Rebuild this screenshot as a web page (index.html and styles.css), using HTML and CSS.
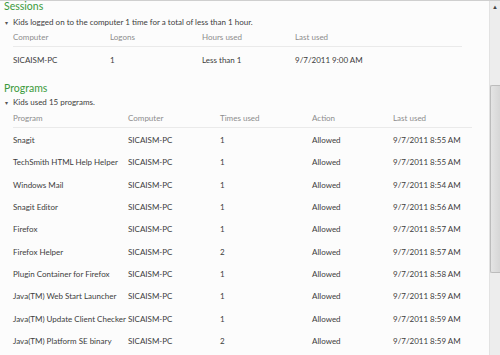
FILE: index.html
```html
<!DOCTYPE html>
<html lang="en">
<head>
    <meta charset="UTF-8">
    <title>Activity report</title>
    <link rel="stylesheet" href="styles.css">
</head>
<body>
    <div class="window">
        <div class="content">
            <h2>Sessions</h2>
            <div class="summary"><span class="arrow">&#9662;</span>Kids logged on to the computer 1 time for a total of less than 1 hour.</div>
            <div class="table sessions">
                <div class="head">Computer</div>
                <div class="head">Logons</div>
                <div class="head">Hours used</div>
                <div class="head">Last used</div>
                <div class="cell">SICAISM-PC</div>
                <div class="cell">1</div>
                <div class="cell">Less than 1</div>
                <div class="cell">9/7/2011 9:00 AM</div>
            </div>

            <h2 class="programs-title">Programs</h2>
            <div class="summary"><span class="arrow">&#9662;</span>Kids used 15 programs.</div>
            <div class="table programs" id="programs">
                <div class="head">Program</div>
                <div class="head">Computer</div>
                <div class="head">Times used</div>
                <div class="head">Action</div>
                <div class="head">Last used</div>
            </div>
        </div>
        <div class="scrollbar">
            <div class="arrow-up">&#9650;</div>
            <div class="thumb"></div>
        </div>
    </div>
    <script>
        let rows = [
            ["Snagit", 1, "8:55"],
            ["TechSmith HTML Help Helper", 1, "8:55"],
            ["Windows Mail", 1, "8:54"],
            ["Snagit Editor", 1, "8:56"],
            ["Firefox", 1, "8:57"],
            ["Firefox Helper", 2, "8:57"],
            ["Plugin Container for Firefox", 1, "8:58"],
            ["Java(TM) Web Start Launcher", 1, "8:59"],
            ["Java(TM) Update Client Checker", 1, "8:59"],
            ["Java(TM) Platform SE binary", 2, "8:59"]
        ];
        let table = document.getElementById("programs");
        rows.forEach(r => {
            [r[0], "SICAISM-PC", r[1], "Allowed", "9/7/2011 " + r[2] + " AM"].forEach(text => {
                let cell = document.createElement("div");
                cell.className = "row";
                cell.innerText = text;
                table.appendChild(cell);
            });
        });
    </script>
</body>
</html>
```

FILE: styles.css
```css
body { margin: 0; background: #fcfcfc; font-family: Lato, "Open Sans", sans-serif; font-size: 8px; color: #3c3c3c; overflow: hidden; }
.window { display: flex; height: 355px; border-top: 1px solid #cfcfcf; box-sizing: border-box; }
.content { flex: 1; padding-left: 4px; overflow: hidden; }
h2 { margin: 0; font-weight: normal; font-size: 10.5px; line-height: 16px; color: #3b9a3b; margin-top: -3px; }
.programs-title { margin-top: 8px; }
.summary { margin-top: 2px; line-height: 12px; }
.programs-title + .summary { margin-top: 0; }
.arrow { font-size: 6px; color: #555; display: inline-block; width: 8px; padding-left: 1px; }
.table { display: grid; margin-left: 9px; }
.sessions { grid-template-columns: 97px 92px 93px 167px; width: 449px; margin-top: -1px; }
.programs { grid-template-columns: 115px 92px 92px 81px 79px; width: 459px; }
.table > div { white-space: nowrap; }
.table > .head { color: #8c8c8c; line-height: 18px; border-bottom: 1px solid #eaeaea; }
.table > .cell { line-height: 24px; }
.sessions > .cell { margin-top: 1px; }
.table > .row { height: 22.35px; line-height: 22px; }
.programs > .row:nth-child(-n+10) { margin-top: 1px; }
.scrollbar { width: 10px; background: #ededed; border-left: 1px solid #e2e2e2; position: relative; }
.arrow-up { font-size: 6px; color: #444; text-align: center; line-height: 10px; margin-top: 1px; }
.thumb { position: absolute; top: 84px; left: 0; right: 0; height: 186px; background: linear-gradient(to right, #e4e4e4, #d6d6d6); border: 1px solid #bcbcbc; border-right: none; border-radius: 2px 0 0 2px; }
```
